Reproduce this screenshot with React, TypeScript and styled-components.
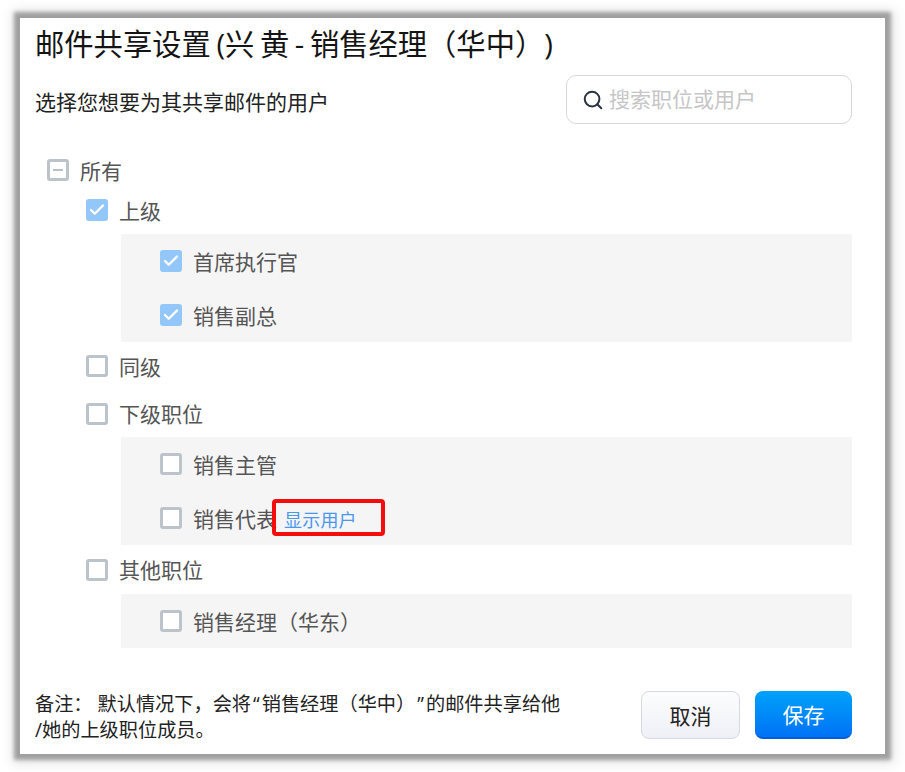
import React from "react";
import styled, { createGlobalStyle } from "styled-components";
import { Search, Check } from "lucide-react";

const Global = createGlobalStyle`
  html, body { margin: 0; padding: 0; background: #fff; }
  body { font-family: "Open Sans", "Noto Sans CJK SC", sans-serif; text-spacing-trim: space-all; }
  * { box-sizing: border-box; }
`;

const Page = styled.div`
  width: 905px;
  height: 772px;
  padding: 18px 20px;
  background: #fff;
`;

const Dialog = styled.div`
  width: 865px;
  height: 736px;
  padding: 0 33px 15px 16px;
  background: #fff;
  display: flex;
  flex-direction: column;
  box-shadow: 0 0 4px 6px #a0a0a0, 1px 1px 12px 9px #e8e8e8;
`;

const Title = styled.h1`
  margin: 6px 0 0 -1px;
  height: 40px;
  font-size: 29.3px;
  line-height: 40px;
  font-weight: 400;
  word-spacing: -2px;
  color: #141414;
  white-space: nowrap;
`;

const HeadRow = styled.div`
  display: flex;
  justify-content: space-between;
  align-items: center;
  margin-top: 11px;
`;

const Subtitle = styled.div`
  font-size: 21px;
  line-height: 30px;
  color: #222;
  margin: 4px 0 0 -1px;
`;

const SearchBox = styled.div`
  width: 286px;
  height: 49px;
  border: 1px solid #d5d8de;
  border-radius: 10px;
  display: flex;
  align-items: center;
  gap: 5px;
  padding: 0 0 0 15px;
  color: #2a3342;
`;

const Placeholder = styled.span`
  font-size: 21px;
  color: #c6c6c6;
  margin-bottom: 3px;
`;

const Tree = styled.div`
  margin-top: 30px;
  flex: 1;
`;

const Row = styled.div<{ $level: number; $height: number }>`
  display: flex;
  align-items: center;
  height: ${(p) => p.$height}px;
  padding-left: ${(p) => [11, 50, 39][p.$level]}px;
  font-size: 21px;
  color: #555;
`;

const Box = styled.span<{ $checked?: boolean }>`
  width: 22px;
  height: 22px;
  flex: none;
  margin-right: 11px;
  border-radius: 3px;
  display: flex;
  align-items: center;
  justify-content: center;
  color: ${(p) => (p.$checked ? "#fff" : "#b8c0c9")};
  background: ${(p) => (p.$checked ? "#93c6f9" : "#fff")};
  border: ${(p) => (p.$checked ? "none" : "3px solid #bcc3cb")};
`;

const Dash = styled.span`
  width: 10px;
  height: 2px;
  background: #b8c0c9;
`;

const Panel = styled.div`
  margin-left: 85px;
  background: #f5f5f5;
`;

const Label = styled.span`
  white-space: nowrap;
  margin-bottom: 1px;
`;

const LinkWrap = styled.span`
  position: relative;
  margin-left: 7px;
  margin-top: 2px;
  font-size: 18px;
  letter-spacing: 0.2px;
  color: #4a97ee;
  white-space: nowrap;
`;

const RedBox = styled.span`
  position: absolute;
  left: -12px;
  top: -7px;
  width: 113px;
  height: 37px;
  border: 4px solid #f40d0d;
  border-radius: 4px;
`;

const Footer = styled.div`
  display: flex;
  justify-content: space-between;
  align-items: flex-start;
  height: 48px;
`;

const Note = styled.div`
  margin-left: -1px;
  font-size: 19.2px;
  line-height: 26px;
  color: #222;
  white-space: nowrap;
`;

const Quote = styled.span`
  margin: 0 2px;
`;

const Buttons = styled.div`
  display: flex;
  gap: 15px;
`;

const CancelButton = styled.button`
  width: 99px;
  height: 48px;
  border: 1px solid #d5d9e6;
  border-radius: 8px;
  background: linear-gradient(#fdfdfe, #eef0f6);
  color: #222;
  font: inherit;
  font-size: 21px;
  padding: 0;
`;

const SaveButton = styled.button`
  width: 97px;
  height: 48px;
  border: none;
  border-bottom: 2px solid #0060d4;
  border-radius: 8px;
  background: linear-gradient(#00a2fa, #0072f6);
  color: #fff;
  font: inherit;
  font-size: 21px;
  padding: 0;
`;

type RowProps = { level: number; height: number; label: string; checked?: boolean; mixed?: boolean; children?: React.ReactNode };

const TreeRow = ({ level, height, label, checked, mixed, children }: RowProps) => (
  <Row $level={level} $height={height}>
    <Box $checked={checked}>
      {checked && <Check size={18} strokeWidth={3.2} />}
      {mixed && <Dash />}
    </Box>
    <Label>{label}</Label>
    {children}
  </Row>
);

export default function App() {
  return (
    <Page>
      <Global />
      <Dialog>
        <Title>邮件共享设置 (兴 黄 - 销售经理（华中）)</Title>
        <HeadRow>
          <Subtitle>选择您想要为其共享邮件的用户</Subtitle>
          <SearchBox>
            <Search size={22} strokeWidth={2.2} />
            <Placeholder>搜索职位或用户</Placeholder>
          </SearchBox>
        </HeadRow>
        <Tree>
          <TreeRow level={0} height={32} label="所有" mixed />
          <TreeRow level={1} height={48} label="上级" checked />
          <Panel>
            <TreeRow level={2} height={54} label="首席执行官" checked />
            <TreeRow level={2} height={54} label="销售副总" checked />
          </Panel>
          <TreeRow level={1} height={48} label="同级" />
          <TreeRow level={1} height={47} label="下级职位" />
          <Panel>
            <TreeRow level={2} height={54} label="销售主管" />
            <TreeRow level={2} height={54} label="销售代表">
              <LinkWrap>
                显示用户
                <RedBox />
              </LinkWrap>
            </TreeRow>
          </Panel>
          <TreeRow level={1} height={49} label="其他职位" />
          <Panel>
            <TreeRow level={2} height={54} label="销售经理（华东）" />
          </Panel>
        </Tree>
        <Footer>
          <Note>
            备注： 默认情况下，会将<Quote>“</Quote>销售经理（华中）<Quote>”</Quote>的邮件共享给他
            <br />
            /她的上级职位成员。
          </Note>
          <Buttons>
            <CancelButton>取消</CancelButton>
            <SaveButton>保存</SaveButton>
          </Buttons>
        </Footer>
      </Dialog>
    </Page>
  );
}
